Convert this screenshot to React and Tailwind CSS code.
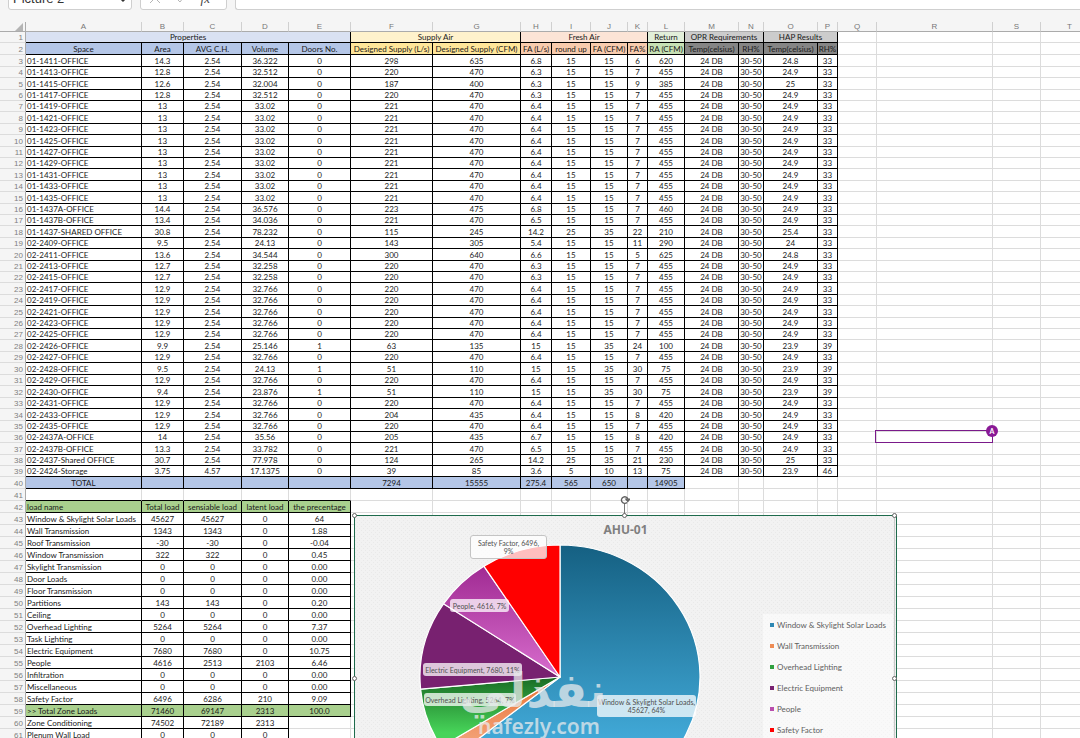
import React from "react";

const COLS = "ABCDEFGHIJKLMNOPQRST".split("");
const COL_WIDTHS = [
  "w-[26px]", "w-[116px]", "w-[42px]", "w-[58px]", "w-[47px]", "w-[62px]", "w-[82px]", "w-[88px]",
  "w-[31px]", "w-[39px]", "w-[37px]", "w-[20px]", "w-[37px]", "w-[54px]", "w-[25px]", "w-[54px]",
  "w-[20px]", "w-[39px]", "w-[116px]", "w-[48px]", "",
];
// Row numbers whose height rounds down to 11px; the others are 12px.
const SHORT = new Set([1, 4, 6, 7, 9, 11, 12, 14, 16, 17, 19, 21, 22, 24, 26, 27, 29, 31, 33, 35, 36, 38, 39]);

const SPACES = `01-1411-OFFICE|14.3|2.54|36.322|0|298|635|6.8|15|15|6|620|24.8|33
01-1413-OFFICE|12.8|2.54|32.512|0|220|470|6.3|15|15|7|455|24.9|33
01-1415-OFFICE|12.6|2.54|32.004|0|187|400|6.3|15|15|9|385|25|33
01-1417-OFFICE|12.8|2.54|32.512|0|220|470|6.3|15|15|7|455|24.9|33
01-1419-OFFICE|13|2.54|33.02|0|221|470|6.4|15|15|7|455|24.9|33
01-1421-OFFICE|13|2.54|33.02|0|221|470|6.4|15|15|7|455|24.9|33
01-1423-OFFICE|13|2.54|33.02|0|221|470|6.4|15|15|7|455|24.9|33
01-1425-OFFICE|13|2.54|33.02|0|221|470|6.4|15|15|7|455|24.9|33
01-1427-OFFICE|13|2.54|33.02|0|221|470|6.4|15|15|7|455|24.9|33
01-1429-OFFICE|13|2.54|33.02|0|221|470|6.4|15|15|7|455|24.9|33
01-1431-OFFICE|13|2.54|33.02|0|221|470|6.4|15|15|7|455|24.9|33
01-1433-OFFICE|13|2.54|33.02|0|221|470|6.4|15|15|7|455|24.9|33
01-1435-OFFICE|13|2.54|33.02|0|221|470|6.4|15|15|7|455|24.9|33
01-1437A-OFFICE|14.4|2.54|36.576|0|223|475|6.8|15|15|7|460|24.9|33
01-1437B-OFFICE|13.4|2.54|34.036|0|221|470|6.5|15|15|7|455|24.9|33
01-1437-SHARED OFFICE|30.8|2.54|78.232|0|115|245|14.2|25|35|22|210|25.4|33
02-2409-OFFICE|9.5|2.54|24.13|0|143|305|5.4|15|15|11|290|24|33
02-2411-OFFICE|13.6|2.54|34.544|0|300|640|6.6|15|15|5|625|24.8|33
02-2413-OFFICE|12.7|2.54|32.258|0|220|470|6.3|15|15|7|455|24.9|33
02-2415-OFFICE|12.7|2.54|32.258|0|220|470|6.3|15|15|7|455|24.9|33
02-2417-OFFICE|12.9|2.54|32.766|0|220|470|6.4|15|15|7|455|24.9|33
02-2419-OFFICE|12.9|2.54|32.766|0|220|470|6.4|15|15|7|455|24.9|33
02-2421-OFFICE|12.9|2.54|32.766|0|220|470|6.4|15|15|7|455|24.9|33
02-2423-OFFICE|12.9|2.54|32.766|0|220|470|6.4|15|15|7|455|24.9|33
02-2425-OFFICE|12.9|2.54|32.766|0|220|470|6.4|15|15|7|455|24.9|33
02-2426-OFFICE|9.9|2.54|25.146|1|63|135|15|15|35|24|100|23.9|39
02-2427-OFFICE|12.9|2.54|32.766|0|220|470|6.4|15|15|7|455|24.9|33
02-2428-OFFICE|9.5|2.54|24.13|1|51|110|15|15|35|30|75|23.9|39
02-2429-OFFICE|12.9|2.54|32.766|0|220|470|6.4|15|15|7|455|24.9|33
02-2430-OFFICE|9.4|2.54|23.876|1|51|110|15|15|35|30|75|23.9|39
02-2431-OFFICE|12.9|2.54|32.766|0|220|470|6.4|15|15|7|455|24.9|33
02-2433-OFFICE|12.9|2.54|32.766|0|204|435|6.4|15|15|8|420|24.9|33
02-2435-OFFICE|12.9|2.54|32.766|0|220|470|6.4|15|15|7|455|24.9|33
02-2437A-OFFICE|14|2.54|35.56|0|205|435|6.7|15|15|8|420|24.9|33
02-2437B-OFFICE|13.3|2.54|33.782|0|221|470|6.5|15|15|7|455|24.9|33
02-2437-Shared OFFICE|30.7|2.54|77.978|0|124|265|14.2|25|35|21|230|25|33
02-2424-Storage|3.75|4.57|17.1375|0|39|85|3.6|5|10|13|75|23.9|46`
  .split("\n")
  .map((line) => {
    const v = line.split("|");
    return [...v.slice(0, 12), "24 DB", "30-50", ...v.slice(12)];
  });

const LOADS = `Window & Skylight Solar Loads|45627|45627|0|64
Wall Transmission|1343|1343|0|1.88
Roof Transmission|-30|-30|0|-0.04
Window Transmission|322|322|0|0.45
Skylight Transmission|0|0|0|0.00
Door Loads|0|0|0|0.00
Floor Transmission|0|0|0|0.00
Partitions|143|143|0|0.20
Ceiling|0|0|0|0.00
Overhead Lighting|5264|5264|0|7.37
Task Lighting|0|0|0|0.00
Electric Equipment|7680|7680|0|10.75
People|4616|2513|2103|6.46
Infiltration|0|0|0|0.00
Miscellaneous|0|0|0|0.00
Safety Factor|6496|6286|210|9.09
>> Total Zone Loads|71460|69147|2313|100.0
Zone Conditioning|74502|72189|2313
Plenum Wall Load|0|0|0`
  .split("\n")
  .map((line) => line.split("|"));

const HEAD = [
  "Space", "Area", "AVG C.H.", "Volume", "Doors No.", "Designed Supply (L/s)", "Designed Supply (CFM)",
  "FA (L/s)", "round up", "FA (CFM)", "FA%", "RA (CFM)", "Temp(celsius)", "RH%", "Temp(celsius)", "RH%",
];
const HEAD_BG = [
  "bg-[#b4c6e7]", "bg-[#b4c6e7]", "bg-[#b4c6e7]", "bg-[#b4c6e7]", "bg-[#b4c6e7]", "bg-[#ffe699]", "bg-[#ffe699]",
  "bg-[#f8cbad]", "bg-[#f8cbad]", "bg-[#f8cbad]", "bg-[#f8cbad]", "bg-[#c6e0b4]", "bg-[#858585]", "bg-[#858585]",
  "bg-[#858585]", "bg-[#858585]",
];
const GROUPS = [
  ["Properties", 5, "bg-[#d9e1f2]"],
  ["Supply Air", 2, "bg-[#fff2cc]"],
  ["Fresh Air", 4, "bg-[#fce4d6]"],
  ["Return", 1, "bg-[#e2efda]"],
  ["OPR Requirements", 2, "bg-[#cccccc]"],
  ["HAP Results", 2, "bg-[#cccccc]"],
];
const TOTALS = ["TOTAL", "", "", "", "", "7294", "15555", "275.4", "565", "650", "", "14905"];

function Cell({ children, left, bg = "", line = "border-black", span }) {
  return (
    <td colSpan={span} className={`border-r border-b p-0 ${line} ${bg}`}>
      <div className={`h-2.5 leading-[11px] whitespace-nowrap flex ${left ? "pl-px justify-start" : "justify-center"}`}>
        {children}
      </div>
    </td>
  );
}

function Row({ n, children, used, below }) {
  return (
    <tr className={SHORT.has(n) ? "h-[11px]" : "h-3"}>
      <th scope="row" className="border-r border-b border-r-[#ababab] border-b-[#dcdcdc] bg-[#f5f5f5] p-0 pr-0.5 text-right font-['Liberation_Sans',sans-serif] font-normal text-[#808080]">
        <div className="h-2.5 leading-[11px]">{n}</div>
      </th>
      {children}
      {COLS.slice(used).map((c, i) => (
        <td
          key={c}
          className={`border-r border-b p-0 ${used + i < below ? "border-b-black border-r-[#dcdcdc]" : "border-[#dcdcdc]"}`}
        />
      ))}
    </tr>
  );
}

const RX = 140;
const RY = 132;
const CX = 205;
const CY = 161;
const SLICES = [
  [45627, "url(#solar)"],
  [1343, "url(#wall)"],
  [5264, "url(#lighting)"],
  [7680, "#782170"],
  [4616, "url(#people)"],
  [6496, "#ff0000"],
];
const TOTAL = SLICES.reduce((s, [v]) => s + v, 0);

function slicePaths() {
  let acc = 0;
  const pt = (f) => {
    const a = f * Math.PI * 2;
    return `${(CX + RX * Math.sin(a)).toFixed(2)} ${(CY - RY * Math.cos(a)).toFixed(2)}`;
  };
  return SLICES.map(([v, fill]) => {
    const from = pt(acc / TOTAL);
    acc += v;
    const to = pt(acc / TOTAL);
    return { fill, d: `M${CX} ${CY}L${from}A${RX} ${RY} 0 ${v / TOTAL > 0.5 ? 1 : 0} 1 ${to}Z` };
  });
}

function Gradient({ id, from, to, end = "1" }) {
  return (
    <linearGradient id={id} x1="0" y1="0" x2="0" y2="1">
      <stop offset="0" stopColor={from} />
      <stop offset={end} stopColor={to} />
    </linearGradient>
  );
}

const LEGEND = [
  ["Window & Skylight Solar Loads", "bg-[#2f88b3]"],
  ["Wall Transmission", "bg-[#ee8c55]"],
  ["Overhead Lighting", "bg-[#30a03e]"],
  ["Electric Equipment", "bg-[#782170]"],
  ["People", "bg-[#b94ead]"],
  ["Safety Factor", "bg-[#ff0000]"],
];

const HANDLES = [
  "-left-[3px] -top-[3px]",
  "left-[267px] -top-[3px]",
  "left-[537px] -top-[3px]",
  "-left-[3px] top-[160px]",
  "left-[537px] top-[160px]",
];

function Label({ className, children }) {
  return (
    <div className={`absolute flex items-center justify-center rounded-[3px] bg-white/75 text-center text-[7px] leading-2 whitespace-nowrap text-[#505050] ${className}`}>
      {children}
    </div>
  );
}

function Chart() {
  return (
    <figure
      aria-label="AHU-01"
      className="absolute left-[354px] top-[493px] h-[326px] w-[543px] border border-[#1e6b4c] bg-[#f2f2f2]"
    >
      <svg className="absolute inset-0 h-full w-full" aria-hidden="true">
        <defs>
          <pattern id="weave" width="4" height="4" patternUnits="userSpaceOnUse">
            <path d="M0 0h1v1H0zM2 2h1v1H2z" fill="#e9e9e9" />
          </pattern>
          <Gradient id="solar" from="#156082" to="#46b1e1" end="0.82" />
          <Gradient id="wall" from="#e97132" to="#f6b08c" />
          <Gradient id="lighting" from="#196b24" to="#47d459" end="0.8" />
          <Gradient id="people" from="#a02b93" to="#d86dcd" />
        </defs>
        <rect width="100%" height="100%" fill="url(#weave)" />
        {slicePaths().map((s) => (
          <path key={s.d} d={s.d} fill={s.fill} stroke="#fff" strokeWidth="1.2" strokeLinejoin="round" />
        ))}
        <path d="M539.5 0V326" stroke="#c9c9c9" />
      </svg>
      <figcaption className="relative pt-1.5 text-center font-['Noto_Sans',sans-serif] text-[12px] leading-4 font-bold text-[#7f7f7f]">AHU-01</figcaption>
      <Label className="left-[115px] top-[19px] h-6 w-[77px] border border-[#c4c4c4]">
        Safety Factor, 6496,
        <br />
        9%
      </Label>
      <Label className="left-[95px] top-[83px] h-[13px] w-[59px]">People, 4616, 7%</Label>
      <Label className="left-[68px] top-[147px] h-[13px] w-[99px]">Electric Equipment, 7680, 11%</Label>
      <Label className="left-[69px] top-[177px] h-[13px] w-[92px]">Overhead Lighting, 5264, 7%</Label>
      <Label className="left-[242px] top-[179px] h-[22px] w-[99px]">
        Window & Skylight Solar Loads,
        <br />
        45627, 64%
      </Label>
      <ul className="absolute left-[408px] top-[98px] flex w-[130px] flex-col bg-white/50 pl-[7px]">
        {LEGEND.map(([name, color]) => (
          <li key={name} className="flex h-[21px] items-center gap-[3px] whitespace-nowrap text-[8px] leading-2.5 text-[#606060]">
            <span className={`size-1 ${color}`} />
            {name}
          </li>
        ))}
      </ul>
      <div className="absolute left-[116px] top-[152px] flex w-[136px] flex-col items-center text-[#e8eaec]/75">
        <span lang="ar" dir="rtl" className="h-11 pr-3 font-['DejaVu_Sans',sans-serif] text-[48px] leading-[44px] font-bold whitespace-nowrap">نفذلي</span>
        <span className="font-['Noto_Sans',sans-serif] text-[21px] leading-7 font-semibold">nafezly.com</span>
      </div>
      <div className="absolute left-[269px] -top-3 h-3 w-px bg-[#777]" />
      <svg className="absolute left-[265px] -top-[21px] size-2.5" viewBox="0 0 12 12" fill="none" stroke="#606060" strokeWidth="1.6" aria-hidden="true">
        <path d="M8.5 9A4 4 0 1 1 9.6 5M7.2 5h4.3L9.4 7.6z" />
      </svg>
      {HANDLES.map((pos) => (
        <span key={pos} className={`absolute size-[5px] rounded-full border border-[#666] bg-white ${pos}`} />
      ))}
    </figure>
  );
}

function FormulaBar() {
  return (
    <header className="flex h-[22px] items-start gap-2 bg-[#f5f5f5] pl-2 text-[#444]">
      <label className="relative -mt-3 flex h-[22px] w-[124px] shrink-0 items-center rounded-[3px] border border-[#cfcfcf] bg-white">
        <input aria-label="Name box" defaultValue="Picture 2" className="w-full bg-transparent pl-1 font-['Liberation_Sans',sans-serif] text-[13px] leading-4 text-[#333] outline-none" />
        <svg className="mr-1 size-2 shrink-0" viewBox="0 0 8 8" fill="none" stroke="#333" strokeWidth="1.5" aria-hidden="true"><path d="M1 3l3 3 3-3" /></svg>
      </label>
      <div className="-mt-3 flex h-[22px] w-[87px] shrink-0 items-center justify-between rounded-[3px] border border-[#cfcfcf] bg-white px-2">
        <button aria-label="Cancel"><svg className="size-3" viewBox="0 0 12 12" fill="none" stroke="#b5b5b5" aria-hidden="true"><path d="M1 0l10 10M11 0L1 10" /></svg></button>
        <button aria-label="Enter"><svg className="size-3" viewBox="0 0 12 12" fill="none" stroke="#b5b5b5" aria-hidden="true"><path d="M2 6l3 3 6-8" /></svg></button>
        <button aria-label="Insert function" className="pr-2 font-['Liberation_Serif',serif] text-[13px] leading-4 italic">fx</button>
      </div>
      <input aria-label="Formula bar" className="-mt-3 h-[22px] min-w-0 flex-1 rounded-l-[3px] border border-r-0 border-[#cfcfcf] bg-white outline-none" />
    </header>
  );
}

export default function App() {
  return (
    <main className="h-screen overflow-hidden bg-white font-['Lato',sans-serif] text-[8px] text-[#1a1a1a]">
      <FormulaBar />
      <div className="relative">
        <table className="w-full min-w-[1099px] table-fixed border-separate border-spacing-0">
          <colgroup>
            {COL_WIDTHS.map((w, i) => (
              <col key={i} className={w} />
            ))}
          </colgroup>
          <thead>
            <tr className="h-2.5 bg-[#f5f5f5] font-['Liberation_Sans',sans-serif] text-[#777]">
              <th className="border-r border-b border-[#ababab] p-0">
                <svg className="ml-auto mr-0.5 size-2" viewBox="0 0 8 8" role="img" aria-label="Select all"><path d="M8 0v8H0z" fill="#b4b4b4" /></svg>
              </th>
              {COLS.map((c) => (
                <th key={c} scope="col" className="border-r border-b border-r-[#d0d0d0] border-b-[#ababab] p-0 font-normal">
                  <div className="h-[9px] leading-[9px]">{c}</div>
                </th>
              ))}
            </tr>
          </thead>
          <tbody>
            <Row n={1} used={16}>
              {GROUPS.map(([name, span, bg]) => (
                <Cell key={name} span={span} bg={bg}>{name}</Cell>
              ))}
            </Row>
            <Row n={2} used={16}>
              {HEAD.map((h, i) => (
                <Cell key={i} bg={HEAD_BG[i]}>{h}</Cell>
              ))}
            </Row>
            {SPACES.map((row, r) => (
              <Row key={r} n={r + 3} used={16}>
                {row.map((v, i) => (
                  <Cell key={i} left={i === 0}>{v}</Cell>
                ))}
              </Row>
            ))}
            <Row n={40} used={12}>
              {TOTALS.map((v, i) => (
                <Cell key={i} bg="bg-[#b4c6e7]">{v}</Cell>
              ))}
            </Row>
            <Row n={41} used={0} below={5} />
            <Row n={42} used={5}>
              {["load name", "Total load", "sensiable load", "latent load", "the precentage"].map((v, i) => (
                <Cell key={v} left={i === 0} bg="bg-[#a9d08e]">{v}</Cell>
              ))}
            </Row>
            {LOADS.map((row, r) => (
              <Row key={r} n={r + 43} used={row.length}>
                {row.map((v, i) => (
                  <Cell key={i} left={i === 0} bg={r === 16 ? "bg-[#a9d08e]" : ""}>{v}</Cell>
                ))}
              </Row>
            ))}
          </tbody>
        </table>
        <div className="absolute left-[875px] top-[408px] h-[13px] w-[118px] border border-[#7a1a8a]">
          <span className="absolute -right-1.5 -top-1.5 flex size-3 items-center justify-center rounded-full bg-[#8a1a96] text-[7px] font-bold text-white">A</span>
        </div>
        <Chart />
      </div>
    </main>
  );
}
